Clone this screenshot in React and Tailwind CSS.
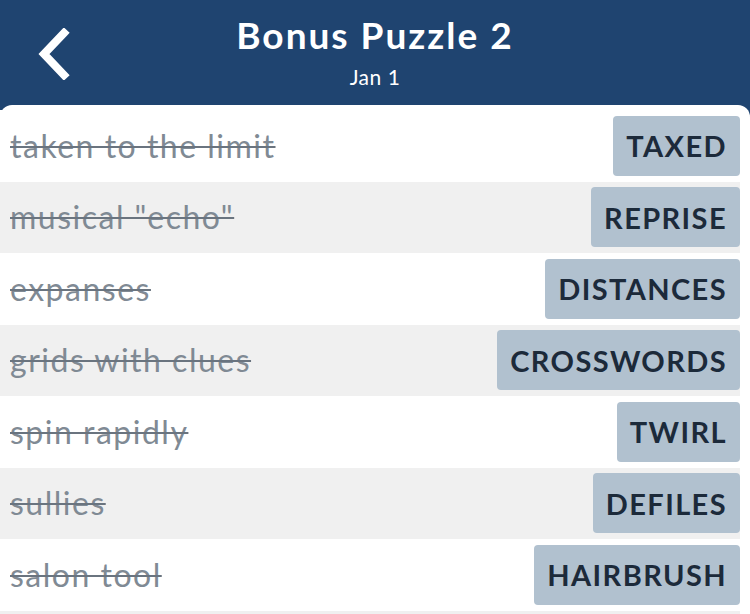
const rows = [
  { clue: 'taken to the limit', answer: 'TAXED' },
  { clue: 'musical "echo"', answer: 'REPRISE' },
  { clue: 'expanses', answer: 'DISTANCES' },
  { clue: 'grids with clues', answer: 'CROSSWORDS' },
  { clue: 'spin rapidly', answer: 'TWIRL' },
  { clue: 'sullies', answer: 'DEFILES' },
  { clue: 'salon tool', answer: 'HAIRBRUSH' },
];

export default function App() {
  return (
    <div className="w-[750px] h-[614px] overflow-hidden bg-[#1f4470] font-['Lato',sans-serif]">
      <header className="relative h-[105px] flex flex-col items-center">
        <button className="absolute left-[34px] top-[28px] text-white">
          <svg width="40" height="52" viewBox="0 0 40 52" fill="none">
            <path d="M30 5 L10 26 L30 47" stroke="white" strokeWidth="8" strokeLinecap="square" strokeLinejoin="miter" />
          </svg>
        </button>
        <h1 className="mt-[12px] text-[37px] leading-[46px] font-bold tracking-[2px] text-white">Bonus Puzzle 2</h1>
        <div className="mt-[7px] text-[21px] leading-[24px] tracking-[0.5px] text-white">Jan 1</div>
      </header>
      <main className="bg-white rounded-t-[12px] pt-[5px] pr-[10px] h-[509px]">
        {rows.map((r, i) => (
          <div
            key={i}
            className={`flex items-center justify-between h-[71.5px] pl-[10px] ${i % 2 === 1 ? 'bg-[#f0f0f0]' : 'bg-white'}`}
          >
            <span className="text-[32px] tracking-[1.5px] text-[#808a94] line-through decoration-[1.5px] decoration-[#6a747f]">{r.clue}</span>
            <span className="h-[60px] flex items-center px-[13px] rounded-[4px] bg-[#b1c1cf] text-[#1c2a3a] text-[29px] font-bold tracking-[1.4px]">
              {r.answer}
            </span>
          </div>
        ))}
        <div className="h-[71.5px] bg-[#f0f0f0]" />
      </main>
    </div>
  );
}
